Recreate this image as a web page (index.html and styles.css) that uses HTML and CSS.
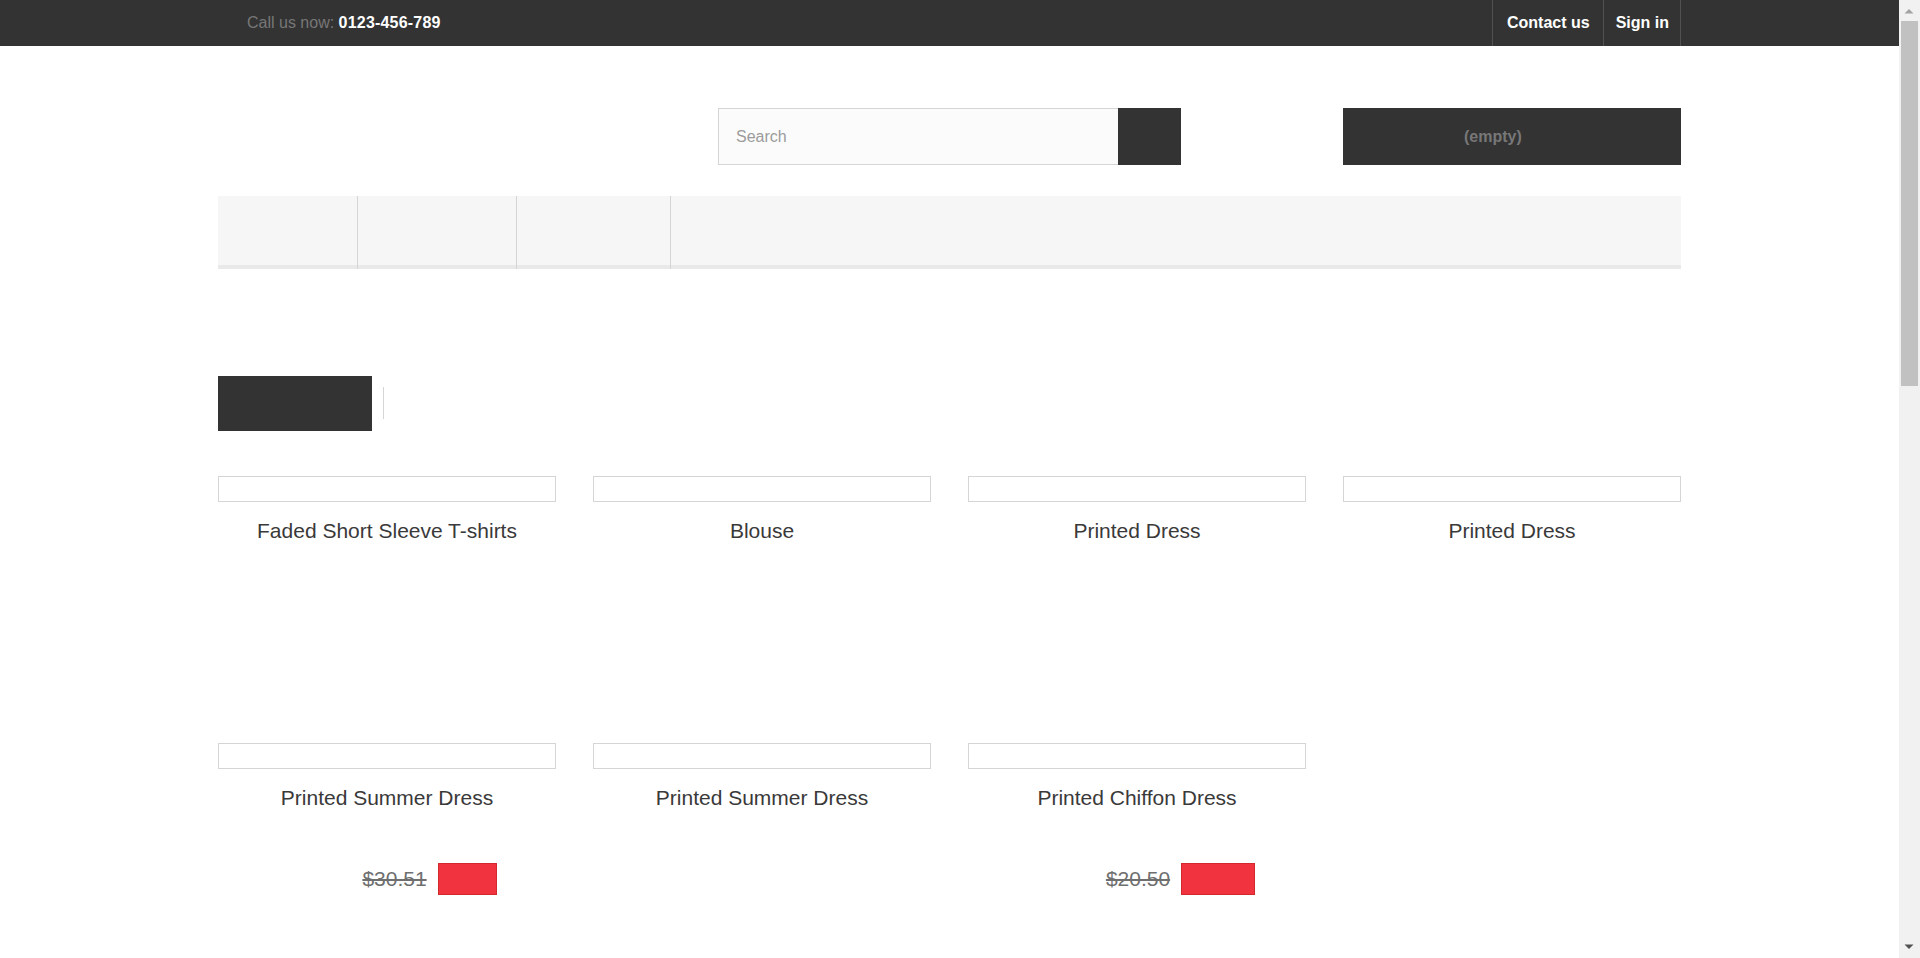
FILE: index.html
```html
<!DOCTYPE html>
<html lang="en">
<head>
<meta charset="utf-8">
<title>My Store</title>
<link rel="stylesheet" href="styles.css">
</head>
<body>
<div class="topbar">
  <div class="container topbar-inner">
    <div class="shop-phone">Call us now: <strong>0123-456-789</strong></div>
    <nav class="top-links">
      <a href="#" class="top-link contact">Contact us</a>
      <a href="#" class="top-link login">Sign in</a>
    </nav>
  </div>
</div>

<header class="container header">
  <form class="search">
    <input class="search-input" type="text" placeholder="Search">
    <button class="search-btn" type="button"></button>
  </form>
  <div class="cart">(empty)</div>
</header>

<div class="container">
  <ul class="menu">
    <li class="menu-item item-1"></li>
    <li class="menu-item item-2"></li>
    <li class="menu-item item-3"></li>
    <li class="menu-fill"></li>
  </ul>
</div>

<main class="container main">
  <div class="tabs">
    <div class="tab active"></div>
    <div class="tab-sep"></div>
  </div>

  <ul class="products">
    <li class="product">
      <div class="thumb"></div>
      <h5 class="name">Faded Short Sleeve T-shirts</h5>
      <div class="price-row"></div>
    </li>
    <li class="product">
      <div class="thumb"></div>
      <h5 class="name">Blouse</h5>
      <div class="price-row"></div>
    </li>
    <li class="product">
      <div class="thumb"></div>
      <h5 class="name">Printed Dress</h5>
      <div class="price-row"></div>
    </li>
    <li class="product">
      <div class="thumb"></div>
      <h5 class="name">Printed Dress</h5>
      <div class="price-row"></div>
    </li>
    <li class="product">
      <div class="thumb"></div>
      <h5 class="name">Printed Summer Dress</h5>
      <div class="price-row">
        <span class="price-space"></span>
        <span class="old-price">$30.51</span>
        <span class="reduction"></span>
      </div>
    </li>
    <li class="product">
      <div class="thumb"></div>
      <h5 class="name">Printed Summer Dress</h5>
      <div class="price-row"></div>
    </li>
    <li class="product">
      <div class="thumb"></div>
      <h5 class="name">Printed Chiffon Dress</h5>
      <div class="price-row">
        <span class="price-space wide"></span>
        <span class="old-price">$20.50</span>
        <span class="reduction wide"></span>
      </div>
    </li>
  </ul>
</main>

<div class="scrollbar" aria-hidden="true">
  <svg class="sb-arrow" width="21" height="17" viewBox="0 0 21 17"><polygon points="5.5,13.5 14.5,13.5 10,9" fill="#a3a3a3"/></svg>
  <div class="sb-track">
    <div class="sb-thumb"></div>
  </div>
  <svg class="sb-arrow" width="21" height="17" viewBox="0 0 21 17"><polygon points="5.5,3.5 14.5,3.5 10,8" fill="#505050"/></svg>
</div>
</body>
</html>
```

FILE: styles.css
```css
* {
  box-sizing: border-box;
}

html {
  margin: 0;
  padding: 0;
}

body {
  margin: 0 21px 0 0;
  padding: 0;
  font-family: "Liberation Sans", Arial, Helvetica, sans-serif;
  font-size: 16px;
  color: #333333;
  background: #ffffff;
}

.container {
  width: 1463px;
  margin: 0 auto;
}

/* Top bar */
.topbar {
  background: #333333;
  height: 46px;
}

.topbar-inner {
  display: flex;
  justify-content: space-between;
  height: 46px;
}

.shop-phone {
  padding-left: 29px;
  line-height: 46px;
  font-size: 16px;
  color: #777777;
}

.shop-phone strong {
  color: #ffffff;
  font-weight: bold;
  letter-spacing: 0.2px;
}

.top-links {
  display: flex;
  border-right: 1px solid #515151;
}

.top-link {
  display: block;
  border-left: 1px solid #515151;
  line-height: 46px;
  font-weight: bold;
  font-size: 16px;
  color: #ffffff;
  text-decoration: none;
}

.top-link.contact {
  padding: 0 13px 0 14px;
}

.top-link.login {
  padding: 0 11px 0 12px;
}

/* Header */
.header {
  display: flex;
  justify-content: space-between;
  padding-top: 62px;
  height: 119px;
}

.search {
  display: flex;
  margin: 0 0 0 500px;
  height: 57px;
}

.search-input {
  width: 400px;
  height: 57px;
  border: 1px solid #d6d4d4;
  border-right: 0;
  background: #fbfbfb;
  padding: 0 0 0 17px;
  font-family: inherit;
  font-size: 16px;
  color: #333333;
  outline: none;
}

.search-input::placeholder {
  color: #9c9b9b;
}

.search-btn {
  width: 63px;
  height: 57px;
  border: 0;
  background: #333333;
}

.cart {
  width: 338px;
  height: 57px;
  background: #333333;
  color: #777777;
  font-weight: bold;
  font-size: 16px;
  line-height: 57px;
  padding-left: 121px;
}

/* Menu */
.menu {
  list-style: none;
  margin: 31px 0 0;
  padding: 0;
  display: flex;
  height: 73px;
}

.menu-item {
  height: 73px;
  border-right: 1px solid #d6d4d4;
  background: linear-gradient(to bottom, #f6f6f6 0, #f6f6f6 69px, #e9e9e9 69px);
}

.item-1 { width: 140px; }
.item-2 { width: 159px; }
.item-3 { width: 154px; }

.menu-fill {
  flex: 1;
  height: 73px;
  background: #f6f6f6;
  border-bottom: 4px solid #e9e9e9;
}

/* Main */
.main {
  padding-top: 107px;
  padding-bottom: 1400px;
}

.tabs {
  display: flex;
  align-items: flex-start;
}

.tab {
  width: 154px;
  height: 55px;
  background: #333333;
}

.tab-sep {
  width: 1px;
  height: 32px;
  margin: 11px 0 0 11px;
  background: #d6d4d4;
}

.products {
  list-style: none;
  margin: 45px 0 0;
  padding: 0;
  display: grid;
  grid-template-columns: repeat(4, 338px);
  column-gap: 37px;
  row-gap: 115px;
}

.product {
  text-align: center;
}

.thumb {
  height: 26px;
  border: 1px solid #d6d4d4;
}

.name {
  margin: 16px 0 0;
  font-size: 21px;
  line-height: 26px;
  font-weight: normal;
  color: #3a3939;
}

.price-row {
  margin-top: 51px;
  height: 33px;
  display: flex;
  justify-content: center;
  align-items: center;
}

.price-space {
  width: 80px;
  height: 1px;
}

.price-space.wide {
  width: 82px;
}

.old-price {
  font-size: 21px;
  color: #6f6f6f;
  text-decoration: line-through;
  margin: 0 11px 0 5px;
}

.reduction {
  width: 59px;
  height: 32px;
  background: #f13340;
  border: 1px solid #d02a2c;
}

.reduction.wide {
  width: 74px;
}

/* Window scrollbar drawn over the right edge */
.scrollbar {
  position: fixed;
  top: 0;
  right: 0;
  width: 21px;
  height: 100vh;
  background: #f1f1f1;
  display: flex;
  flex-direction: column;
}

.sb-arrow {
  display: block;
  flex: none;
}

.sb-track {
  flex: 1;
  padding: 4px 2px 0 2px;
}

.sb-thumb {
  height: 365px;
  background: #c1c1c1;
}
```
